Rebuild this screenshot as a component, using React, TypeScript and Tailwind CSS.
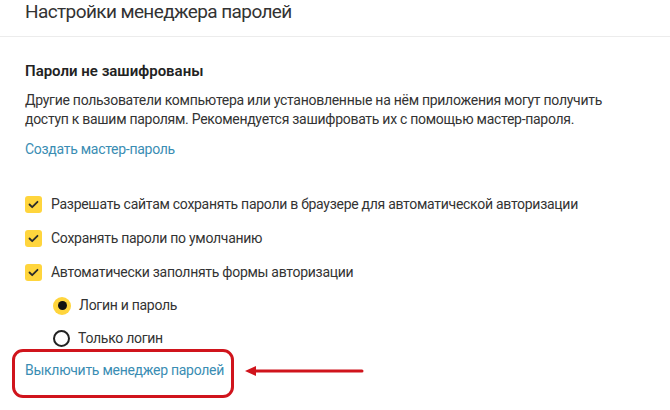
import React from "react";

const font = { fontFamily: 'Roboto, "Noto Sans", Arial, sans-serif' };

function Check({ label }: { label: string }) {
  return (
    <div className="flex items-center h-[34px]">
      <div className="w-[17px] h-[17px] rounded-[3px] bg-[#ffd53d] flex items-center justify-center shrink-0">
        <svg width="11" height="9" viewBox="0 0 11 9">
          <path d="M1.5 4.5 L4.2 7.2 L9.5 1.8" fill="none" stroke="#2b2b2b" strokeWidth="1.8" strokeLinecap="round" strokeLinejoin="round" />
        </svg>
      </div>
      <span className="ml-[9px] text-[14px] tracking-[-0.28px] text-[#333]">{label}</span>
    </div>
  );
}

function Radio({ label, on }: { label: string; on?: boolean }) {
  return (
    <div className="flex items-center h-[33px] pl-[28px]">
      {on ? (
        <div className="w-[18px] h-[18px] rounded-full bg-[#ffd53d] flex items-center justify-center shrink-0">
          <div className="w-[9px] h-[9px] rounded-full bg-[#111]" />
        </div>
      ) : (
        <div className="w-[17px] h-[17px] rounded-full border-2 border-[#222] shrink-0" />
      )}
      <span className="ml-[8px] text-[14px] tracking-[-0.28px] text-[#333]">{label}</span>
    </div>
  );
}

export default function App() {
  return (
    <div className="w-[670px] h-[410px] bg-white overflow-hidden relative" style={font}>
      <div className="h-[37px] border-b border-[#ececec] px-[25px] flex items-start">
        <div className="text-[19px] leading-[24px] tracking-[-0.6px] text-[#333]">Настройки менеджера паролей</div>
      </div>
      <div className="px-[25px]">
        <div className="mt-[24px] text-[15px] leading-[20px] font-semibold text-[#222]">Пароли не зашифрованы</div>
        <p className="mt-[10px] text-[14px] leading-[19px] tracking-[-0.28px] text-[#333]">
          Другие пользователи компьютера или установленные на нём приложения могут получить
          <br />
          доступ к вашим паролям. Рекомендуется зашифровать их с помощью мастер-пароля.
        </p>
        <div className="mt-[10px] text-[14px] leading-[20px] tracking-[-0.28px] text-[#3a8db3]">Создать мастер-пароль</div>
        <div className="mt-[28px] flex flex-col">
          <Check label="Разрешать сайтам сохранять пароли в браузере для автоматической авторизации" />
          <Check label="Сохранять пароли по умолчанию" />
          <Check label="Автоматически заполнять формы авторизации" />
          <Radio label="Логин и пароль" on />
          <Radio label="Только логин" />
        </div>
        <div className="mt-[5px] text-[14px] leading-[20px] tracking-[-0.28px] text-[#3a8db3] inline-block">
          Выключить менеджер паролей
        </div>
      </div>
      <div className="absolute left-[12px] top-[349px] w-[222px] h-[49px] border-[3px] border-[#d0141c] rounded-[11px]" />
      <svg className="absolute left-[243px] top-[363px]" width="122" height="16" viewBox="0 0 122 16">
        <path d="M10 8 H119" stroke="#d0141c" strokeWidth="3" strokeLinecap="round" />
        <path d="M2 8 L13 3 L13 13 Z" fill="#d0141c" />
      </svg>
    </div>
  );
}
